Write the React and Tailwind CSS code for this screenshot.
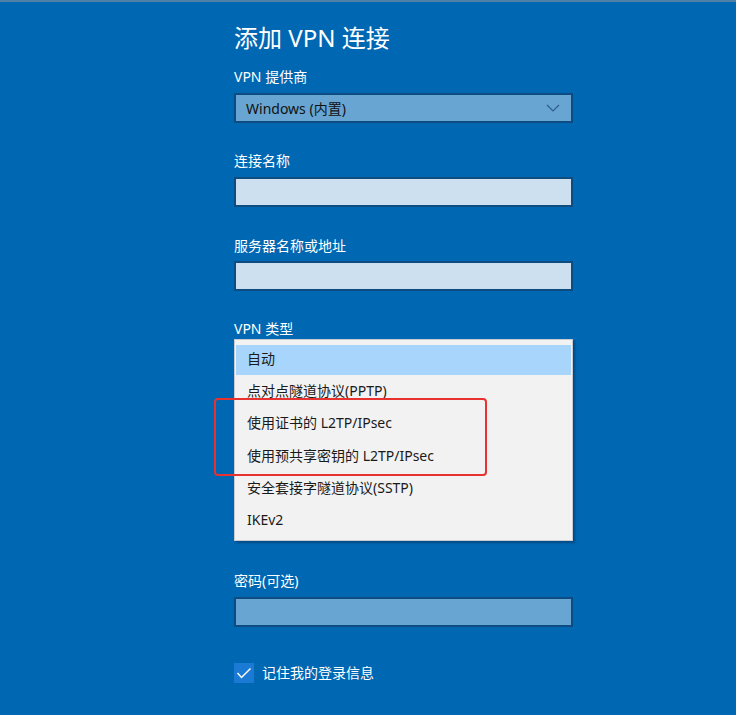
import React from "react";

const font = { fontFamily: '"Noto Sans", "Noto Sans CJK SC", sans-serif' };

export default function App() {
  const items = [
    "自动",
    "点对点隧道协议(PPTP)",
    "使用证书的 L2TP/IPsec",
    "使用预共享密钥的 L2TP/IPsec",
    "安全套接字隧道协议(SSTP)",
    "IKEv2",
  ];
  return (
    <div className="w-[736px] h-[715px] bg-[#0067b3] overflow-hidden relative" style={font}>
      <div className="h-[2px] bg-[#4f80a8]" />
      <div className="ml-[234px] w-[339px] flex flex-col">
        <div className="mt-[20px] h-[32px] leading-[32px] text-[24px] text-white">添加 VPN 连接</div>
        <div className="mt-[13px] h-[20px] leading-[20px] text-[14px] text-white">VPN 提供商</div>
        <div className="mt-[6px] h-[30px] border-2 border-[#0d4c80] bg-[#68a5d2] flex items-center justify-between pl-[10px] pr-[10px]">
          <span className="text-[14px] text-[#111]">Windows (内置)</span>
          <svg width="14" height="8" viewBox="0 0 14 8" className="mr-[1px]">
            <path d="M1 1 L7 7 L13 1" fill="none" stroke="#2e5f88" strokeWidth="1.2" />
          </svg>
        </div>
        <div className="mt-[28px] h-[20px] leading-[20px] text-[14px] text-white">连接名称</div>
        <div className="mt-[6px] h-[30px] border-2 border-[#0d4c80] bg-[#cce0f0]" />
        <div className="mt-[29px] h-[20px] leading-[20px] text-[14px] text-white">服务器名称或地址</div>
        <div className="mt-[5px] h-[30px] border-2 border-[#0d4c80] bg-[#cce0f0]" />
        <div className="mt-[28px] h-[20px] leading-[20px] text-[14px] text-white">VPN 类型</div>
        <div className="relative h-[202px] bg-[#f2f2f2] border border-[#c8ccd0] shadow-[2px_2px_2px_rgba(0,40,80,0.45)] pt-[4px] px-[1px]">
          {items.map((t, i) => (
            <div key={i} className="h-[32.2px] py-[1px]">
              <div
                className={
                  "h-full flex items-center pl-[11px] pb-[3px] text-[14px] text-[#1a1a1a] " +
                  (i === 0 ? "bg-[#a7d5fb]" : "")
                }
              >
                {t}
              </div>
            </div>
          ))}
          <div className="absolute left-[-21px] top-[58px] w-[273px] h-[78px] border-2 border-[#e8322f] rounded-[4px]" />
        </div>
        <div className="mt-[30px] h-[20px] leading-[20px] text-[14px] text-white">密码(可选)</div>
        <div className="mt-[6px] h-[30px] border-2 border-[#0d4c80] bg-[#68a5d2]" />
        <div className="mt-[35px] flex items-center">
          <div className="w-[20px] h-[20px] bg-[#1a7ad4] flex items-center justify-center">
            <svg width="16" height="12" viewBox="0 0 16 12">
              <path d="M1.5 6 L5.5 10.5 L14.5 1.5" fill="none" stroke="white" strokeWidth="1.5" />
            </svg>
          </div>
          <span className="ml-[8px] text-[14px] text-white">记住我的登录信息</span>
        </div>
      </div>
    </div>
  );
}
